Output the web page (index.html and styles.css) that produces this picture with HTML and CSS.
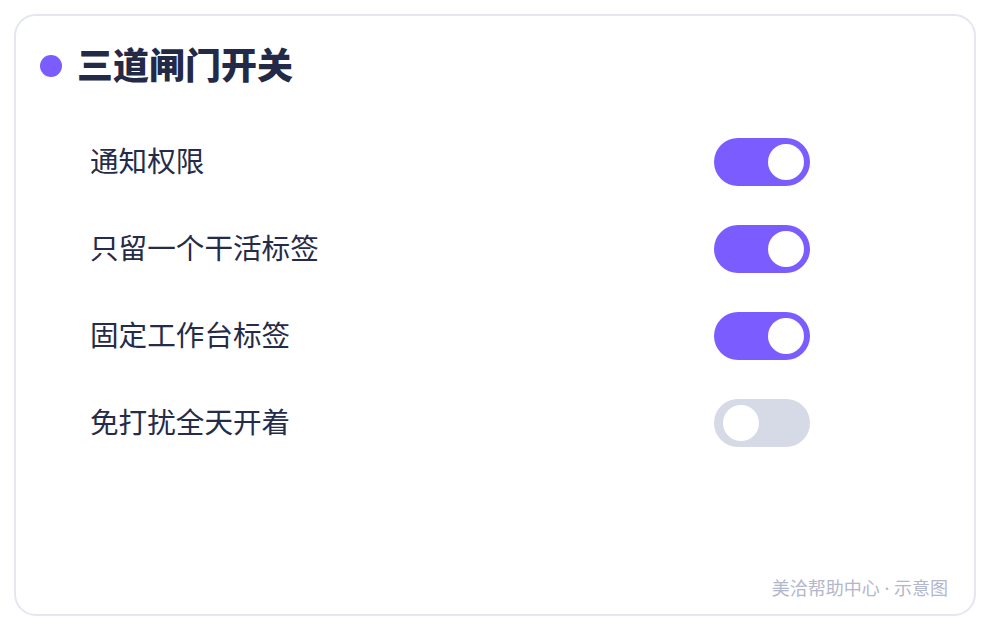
FILE: index.html
```html
<!DOCTYPE html>
<html lang="zh-CN">
<head>
<meta charset="utf-8">
<link rel="stylesheet" href="styles.css">
</head>
<body>
<div class="card">
  <div class="header">
    <span class="dot"></span>
    <h1 class="title">三道闸门开关</h1>
  </div>
  <div class="rows">
    <div class="row"><span class="label">通知权限</span><span class="toggle on"><span class="knob"></span></span></div>
    <div class="row"><span class="label">只留一个干活标签</span><span class="toggle on"><span class="knob"></span></span></div>
    <div class="row"><span class="label">固定工作台标签</span><span class="toggle on"><span class="knob"></span></span></div>
    <div class="row"><span class="label">免打扰全天开着</span><span class="toggle off"><span class="knob"></span></span></div>
  </div>
  <div class="footer">美洽帮助中心<span class="sep"> · </span>示意图</div>
</div>
</body>
</html>
```
FILE: styles.css
```css
* { box-sizing: border-box; }
html, body { margin: 0; padding: 0; background: #ffffff; }
body {
  font-family: "Noto Sans CJK SC", "Noto Sans", sans-serif;
  color: #252b48;
  padding: 14px;
}
.card {
  width: 962px;
  height: 602px;
  border: 2px solid #e4e6f1;
  border-radius: 22px;
  background: #ffffff;
  padding: 24px 26px 14px 24px;
  display: flex;
  flex-direction: column;
}
.header {
  display: flex;
  align-items: center;
  gap: 15px;
  height: 52px;
}
.dot {
  width: 22px;
  height: 22px;
  border-radius: 50%;
  background: #7b5cff;
  flex: none;
}
.title {
  margin: 0;
  font-size: 36px;
  font-weight: 900;
  line-height: 52px;
  color: #232a47;
  position: relative;
  top: -3px;
}
.rows {
  margin-top: 46px;
  margin-left: 50px;
  width: 720px;
  display: flex;
  flex-direction: column;
  gap: 39px;
}
.row {
  display: flex;
  align-items: center;
  justify-content: space-between;
  height: 48px;
}
.label {
  font-size: 28.6px;
  line-height: 40px;
  color: #252b48;
  position: relative;
  top: -2px;
}
.toggle {
  width: 96px;
  height: 48px;
  border-radius: 24px;
  display: flex;
  align-items: center;
  padding: 0 6px 0 9px;
}
.toggle.on { background: #7b5cff; justify-content: flex-end; }
.toggle.off { background: #d6d9e6; justify-content: flex-start; }
.knob {
  width: 36px;
  height: 36px;
  border-radius: 50%;
  background: #ffffff;
}
.footer {
  margin-top: auto;
  align-self: flex-end;
  font-size: 18px;
  line-height: 24px;
  color: #b3b7cb;
}
.sep {
  font-family: "Noto Sans", sans-serif;
}
```
